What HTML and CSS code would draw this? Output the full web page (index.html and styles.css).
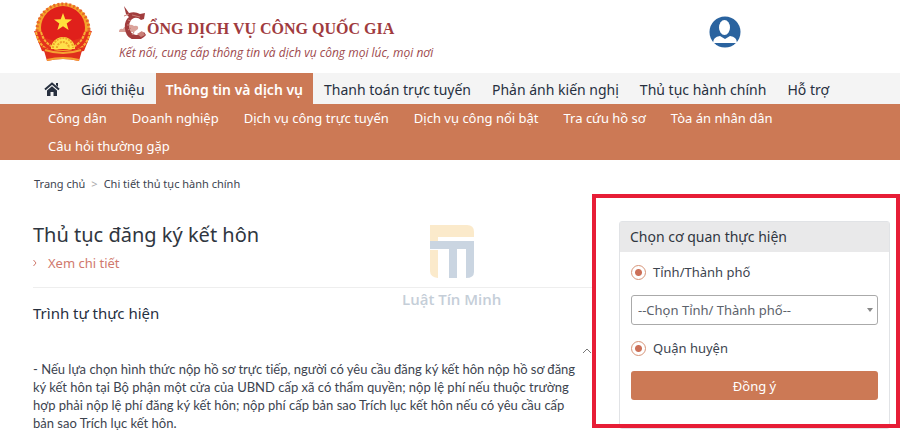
FILE: index.html
```html
<!DOCTYPE html>
<html lang="vi">
<head>
<meta charset="utf-8">
<meta name="viewport" content="width=device-width, initial-scale=1">
<title>Cổng Dịch vụ công Quốc gia</title>
<link rel="stylesheet" href="styles.css">
</head>
<body>
<header class="header">
  <svg class="emblem" viewBox="0 0 60 62" aria-hidden="true">
    <circle cx="30" cy="28" r="27" fill="#f5a52b"/>
    <circle cx="30" cy="28" r="26" fill="none" stroke="#e8662a" stroke-width="3" stroke-dasharray="2 2"/>
    <circle cx="30" cy="26" r="22" fill="#e0201b"/>
    <path d="M30 11l2.300 6.300 6.700.2-5.300 4.100 1.900 6.400-5.600-3.800-5.600 3.800 1.900-6.400-5.300-4.100 6.700-.2z" fill="#ffe23c"/>
    <path d="M1 29l8 1 3 6 10 3-1 12-12-2zM59 29l-8 1-3 6-10 3 1 12 12-2z" fill="#e4321d"/>
    <path d="M3 30q3 15 15 19M57 30q-3 15-15 19M8 30q3 11 12 15M52 30q-3 11-12 15" fill="none" stroke="#f7ae35" stroke-width="2" stroke-dasharray="3 1"/>
    <path d="M18 47a12 12 0 0 1 24 0z" fill="#ffe04a"/>
    <path d="M20 46a10 10 0 0 1 20 0M24 46a6 6 0 0 1 12 0" fill="none" stroke="#eea52a" stroke-width="2" stroke-dasharray="2 1"/>
    <path d="M10 45q20 8 40 0l-4 14q-16-4-32 0z" fill="#df2f1c"/>
    <path d="M12 48q18 6 36 0M14 58q16-4 32 0" fill="none" stroke="#f6a233" stroke-width="2"/>
  </svg>
  <div class="brand">
    <div class="brand-name">
      <svg class="dragon" viewBox="0 0 28 34" role="img" aria-label="C">
        <path d="M0 27q0-4 4-3 1-3 4-2 3-4 7-1 5-1 4 3l-4 3H3z" fill="#dba39b"/>
        <path d="M5 1l5 7q6-2 11 1l5-1-1 6-3 1q-3-3-7-2-5 2-5 9 1 7 7 8 5 0 8-3l2 3q-4 5-10 5-10-1-11-11-1-8 4-12L7 9z" fill="#a13c3d"/>
        <path d="M10 9l-5 2M13 10l8 2M9 15l3 1M8 20l3 0M9 25l3-2M13 30l2-3" fill="none" stroke="#c98078" stroke-width="1"/>
        <path d="M18 29l5-3 3 4-4 2z" fill="#c98078"/>
      </svg>
      <span>ỔNG DỊCH VỤ CÔNG QUỐC GIA</span>
    </div>
    <p class="tagline">Kết nối, cung cấp thông tin và dịch vụ công mọi lúc, mọi nơi</p>
  </div>
  <button class="account" type="button" aria-label="Tài khoản">
    <svg viewBox="0 0 32 32" aria-hidden="true">
      <circle cx="16" cy="16" r="15.500" fill="#2a639f"/>
      <ellipse cx="15.500" cy="11.500" rx="5.500" ry="7.500" fill="#fff"/>
      <path d="M4 27q0-6 7-7l5 3 5-3q7 1 7 7z" fill="#fff"/>
      <path d="M7 28h18" stroke="#2a639f" stroke-width="2"/>
    </svg>
  </button>
</header>

<nav class="nav">
  <a class="home" href="#" aria-label="Trang chủ">
    <svg viewBox="0 0 16 14" aria-hidden="true">
      <path d="M1 7.500l7-6 7 6" fill="none" stroke="#27303f" stroke-width="2"/>
      <path d="M12 1h2v4l-2-2z" fill="#27303f"/>
      <path d="M3 8.500l5-4.300 5 4.300V14H9.500v-4h-3v4H3z" fill="#27303f"/>
    </svg>
  </a>
  <a href="#">Giới thiệu</a>
  <a class="active" href="#">Thông tin và dịch vụ</a>
  <a href="#">Thanh toán trực tuyến</a>
  <a href="#">Phản ánh kiến nghị</a>
  <a href="#">Thủ tục hành chính</a>
  <a href="#">Hỗ trợ</a>
</nav>
<nav class="subnav">
  <a href="#">Công dân</a>
  <a href="#">Doanh nghiệp</a>
  <a href="#">Dịch vụ công trực tuyến</a>
  <a href="#">Dịch vụ công nổi bật</a>
  <a href="#">Tra cứu hồ sơ</a>
  <a href="#">Tòa án nhân dân</a>
  <a href="#">Câu hỏi thường gặp</a>
</nav>

<div class="breadcrumb">
  <a href="#">Trang chủ</a>
  <span class="sep">&gt;</span>
  <span>Chi tiết thủ tục hành chính</span>
</div>

<div class="layout">
  <main class="main">
    <h1>Thủ tục đăng ký kết hôn</h1>
    <a class="detail" href="#">
      <svg viewBox="0 0 4 8" aria-hidden="true"><path d="M.5 1L3 4 .5 7" fill="none" stroke="#d0796d"/></svg>
      <span>Xem chi tiết</span>
    </a>
    <h2>Trình tự thực hiện</h2>
    <button class="collapse" type="button" aria-label="Thu gọn">
      <svg viewBox="0 0 10 6" aria-hidden="true"><path d="M1 5l4-4 4 4" fill="none" stroke="#777"/></svg>
    </button>
    <p class="text">- Nếu lựa chọn hình thức nộp hồ sơ trực tiếp, người có yêu cầu đăng ký kết hôn nộp hồ sơ đăng<br>ký kết hôn tại Bộ phận một cửa của UBND cấp xã có thẩm quyền; nộp lệ phí nếu thuộc trường<br>hợp phải nộp lệ phí đăng ký kết hôn; nộp phí cấp bản sao Trích lục kết hôn nếu có yêu cầu cấp<br>bản sao Trích lục kết hôn.</p>
    <div class="watermark">
      <svg viewBox="0 0 46 56" aria-hidden="true">
        <path d="M1 1h37q7 0 7 7v5H9v4H1zM1 26h8v28q-8-1-8-7z" fill="#fbeacb"/>
        <path d="M1 17h44v31q0 6-8 6V25h-9v29h-8V25H1z" fill="#cad5e1"/>
      </svg>
      <span>Luật Tín Minh</span>
    </div>
  </main>
  <aside class="side">
    <form class="card">
      <h3>Chọn cơ quan thực hiện</h3>
      <div class="fields">
        <label class="choice"><input type="radio" name="province" checked>Tỉnh/Thành phố</label>
        <div class="picker">
          <select aria-label="Tỉnh/Thành phố"><option>--Chọn Tỉnh/ Thành phố--</option></select>
        </div>
        <label class="choice"><input type="radio" name="district" checked>Quận huyện</label>
        <button class="submit" type="button">Đồng ý</button>
      </div>
    </form>
  </aside>
</div>
</body>
</html>
```
FILE: styles.css
```css
*, *::before, *::after { box-sizing: border-box; }
body {
  margin: 0;
  background: #fff;
  color: #3d444f;
  font: 13px/18px "Noto Sans", "Open Sans", sans-serif;
}
a { color: inherit; text-decoration: none; }
button { border: 0; padding: 0; background: none; font: inherit; }
svg { display: block; }
h1, h2, h3, p { margin: 0; font-weight: 400; }

.header { display: flex; height: 73px; padding: 2px 159px 0 33px; }
.emblem { width: 60px; height: 62px; }
.brand { flex: 1; padding: 2px 0 0 26px; }
.brand-name {
  display: flex;
  align-items: center;
  color: #a03b3e;
  font: bold 16px/24px "Liberation Serif", serif;
  height: 36px;
}
.brand-name span { padding-top: 14px; }
.dragon { width: 28px; height: 34px; }
.tagline { padding-top: 4px; color: #9d494d; font: italic 12px/18px "Open Sans", sans-serif; white-space: nowrap; }
.account { align-self: flex-start; margin-top: 14px; }
.account svg { width: 32px; height: 32px; }

.nav {
  display: flex;
  gap: 1px;
  padding-left: 34px;
  background: #f4f4f4;
  color: #27303f;
  font-size: 14px;
  line-height: 33px;
  height: 31px;
  white-space: nowrap;
}
.nav a { padding: 0 10px; }
.nav .home { display: flex; align-items: center; }
.home svg { width: 16px; height: 14px; }
.nav .active { background: #cc7955; color: #fff; font-weight: 600; }

.subnav {
  display: flex;
  flex-wrap: wrap;
  column-gap: 25px;
  padding: 0 80px 0 48px;
  background: #cc7955;
  color: #fff;
  line-height: 28px;
}

.breadcrumb { display: flex; gap: 6px; padding: 15px 34px 0; font-size: 11px; }
.sep { color: #aaa; }

.layout {
  display: grid;
  grid-template-columns: minmax(0, 1fr) 308px;
  padding-top: 1px;
}
.main { position: relative; padding: 27px 0 0 33px; }
h1 { color: #303640; font-size: 20px; line-height: 28px; }
.detail { display: flex; align-items: center; gap: 11px; padding: 5px 0 15px; border-bottom: 1px solid #eee; color: #d0796d; }
.detail svg { width: 4px; height: 8px; }
h2 { padding-top: 13px; color: #27303f; font-size: 15px; line-height: 24px; }
.collapse { display: block; margin: 23px 0 0 auto; }
.collapse svg { width: 10px; height: 6px; }
.text {
  padding-top: 6px;
  font: 13px/18px Lato, sans-serif;
  font-variant-ligatures: none;
  white-space: nowrap;
}
.watermark {
  position: absolute;
  top: 30px;
  left: 402px;
  display: grid;
  justify-items: center;
  gap: 10px;
  color: #c5ced8;
  font: 600 15px/18px "Open Sans", sans-serif;
}
.watermark svg { width: 46px; height: 56px; }

.side { position: relative; padding: 27px 10px 0 27px; }
.side::after {
  content: "";
  position: absolute;
  top: 0;
  left: 0;
  right: 0;
  height: 234px;
  border: 4px solid #e71d36;
  pointer-events: none;
}
.card { border: 1px solid #e1e3e6; border-radius: 3px; }
h3 { padding: 0 10px; background: #e9e9ea; color: #303640; font-size: 14px; line-height: 30px; }
.fields { display: grid; gap: 14px; padding: 11px 11px 28px; }
.choice { display: flex; align-items: center; gap: 7px; }
.choice input {
  appearance: none;
  width: 15px;
  height: 15px;
  margin: 0;
  border: 1px solid #d79478;
  border-radius: 50%;
  background: radial-gradient(circle, #cc7058 0 3px, #fff 4px);
}
.picker { position: relative; }
.picker::after {
  content: "";
  position: absolute;
  top: 13px;
  right: 5px;
  border: 3px solid transparent;
  border-top: 4px solid #888;
  border-bottom: 0;
  pointer-events: none;
}
select {
  appearance: none;
  display: block;
  height: 30px;
  width: 100%;
  padding: 0 6px;
  border: 1px solid #aaa;
  border-radius: 3px;
  background: #fff;
  color: #5c626b;
  font: inherit;
}
.submit { height: 29px; border-radius: 3px; background: #cc7955; color: #fff; }
```
